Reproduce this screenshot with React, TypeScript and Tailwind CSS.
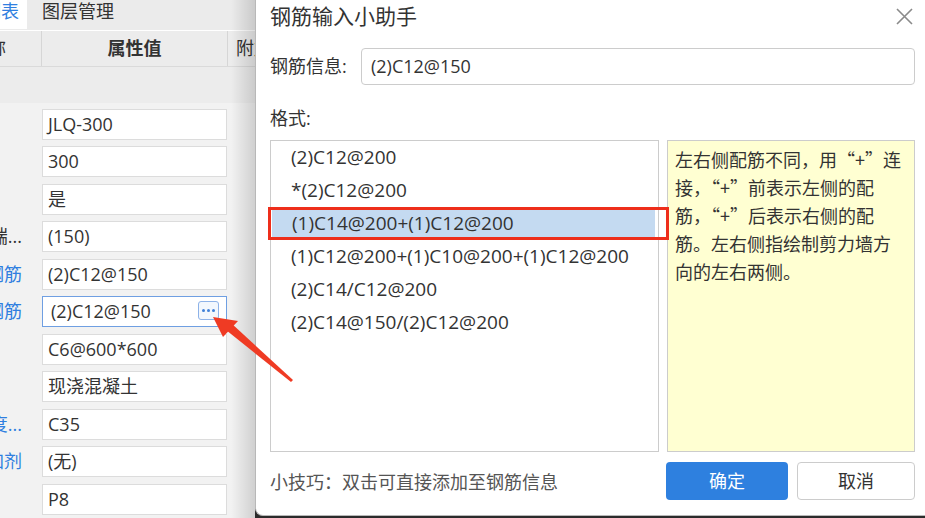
import React from "react";

const rows = [
  { label: "", value: "JLQ-300" },
  { label: "", value: "300" },
  { label: "", value: "是" },
  { label: "是否墙端...", value: "(150)", dark: true },
  { label: "水平分布钢筋", value: "(2)C12@150" },
  { label: "垂直分布钢筋", value: "(2)C12@150", active: true },
  { label: "", value: "C6@600*600" },
  { label: "", value: "现浇混凝土" },
  { label: "混凝土强度...", value: "C35" },
  { label: "混凝土外加剂", value: "(无)" },
  { label: "", value: "P8" },
];

const formats = [
  "(2)C12@200",
  "*(2)C12@200",
  "(1)C14@200+(1)C12@200",
  "(1)C12@200+(1)C10@200+(1)C12@200",
  "(2)C14/C12@200",
  "(2)C14@150/(2)C12@200",
];

const font = { fontFamily: '"Open Sans", "Noto Sans CJK SC", sans-serif' };
const cjk = { fontFamily: '"Noto Sans CJK SC", sans-serif' };

function PropertyPanel() {
  return (
    <div className="relative w-[255px] h-full bg-[#f2f2f2] flex flex-col shrink-0 overflow-hidden text-[18px] text-[#333]">
      {/* tabs */}
      <div className="h-[31px] bg-[#ebebeb] flex border-b border-white">
        <div className="w-[27px] shrink-0 h-[29px] bg-white overflow-hidden flex justify-end pr-[8px]">
          <span className="whitespace-nowrap text-[#2f7fe0] leading-[22px]">属性列表</span>
        </div>
        <div className="ml-[15px] leading-[22px] whitespace-nowrap">图层管理</div>
      </div>
      {/* header */}
      <div className="h-[36px] flex bg-[#ececec] border-b border-[#dadada]">
        <div className="w-[42px] shrink-0 border-r border-[#d6d6d6] overflow-hidden flex justify-end items-center pr-[35px]">
          <span className="whitespace-nowrap">属性名称</span>
        </div>
        <div className="w-[186px] shrink-0 border-r border-[#d6d6d6] flex items-center justify-center font-bold">
          属性值
        </div>
        <div className="flex-1 min-w-0 overflow-hidden pl-[8px] flex items-center whitespace-nowrap">附加</div>
      </div>
      {/* group row */}
      <div className="h-[36px] bg-[#ececec]" />
      <div className="pt-[3px] flex flex-col">
        {rows.map((r, i) => (
          <div key={i} className="h-[37.5px] flex items-center">
            <div className="w-[42px] shrink-0 overflow-hidden flex justify-end pr-[20px]">
              <span className={`whitespace-nowrap ${r.dark ? "text-[#333]" : "text-[#2f7fe0]"}`}>{r.label}</span>
            </div>
            <div
              className={`relative shrink-0 w-[185px] h-[31px] bg-white flex items-center pl-[5px] whitespace-nowrap ${
                r.active ? "border border-[#6f9fe2] pl-[8px]" : "border border-[#dcdcdc]"
              }`}
            >
              {r.value}
              {r.active && (
                <div className="absolute right-[7px] top-[4px] w-[21px] h-[19px] rounded-[3px] border border-[#8db2e8] bg-[#f2f7fd] flex items-center justify-center gap-[2px]">
                  <span className="w-[3px] h-[3px] rounded-full bg-[#3f80d8]" />
                  <span className="w-[3px] h-[3px] rounded-full bg-[#3f80d8]" />
                  <span className="w-[3px] h-[3px] rounded-full bg-[#3f80d8]" />
                </div>
              )}
            </div>
          </div>
        ))}
      </div>
      {/* dialog shadow */}
      <div className="absolute right-0 top-0 h-full w-[24px] bg-gradient-to-r from-transparent to-[rgba(0,0,0,0.14)]" />
    </div>
  );
}

function RebarDialog() {
  return (
    <div className="flex-1 h-[516px] bg-white rounded-bl-[8px] border-l border-b border-[#b8b8b8] pl-[14px] pr-[10px] flex flex-col text-[18px] text-[#333]">
      <div className="h-[32px] flex items-center justify-between">
        <span className="text-[21px] text-[#333] whitespace-nowrap" style={cjk}>钢筋输入小助手</span>
        <svg width="17" height="17" viewBox="0 0 17 17" className="mr-[2px]">
          <path d="M1 1L16 16M16 1L1 16" stroke="#8a8a8a" strokeWidth="1.6" fill="none" />
        </svg>
      </div>
      <div className="mt-[16px] h-[37px] flex items-center">
        <span className="w-[91px] whitespace-nowrap">钢筋信息:</span>
        <div className="flex-1 h-full border border-[#cccccc] rounded-[4px] flex items-center pl-[9px]">
          (2)C12@150
        </div>
      </div>
      <div className="mt-[22px] leading-[22px]">格式:</div>
      <div className="relative mt-[11px] h-[312px] flex gap-[8px]">
        <div className="w-[389px] border border-[#cccccc] flex flex-col text-[19px]">
          {formats.map((f, i) => (
            <div
              key={f}
              className={`h-[33px] flex items-center pl-[20px] whitespace-nowrap ${
                i === 2 ? "bg-[#c4daf1] ml-[1px] mr-[3px] pl-[19px]" : ""
              }`}
            >
              {f}
            </div>
          ))}
        </div>
        <div className="flex-1 bg-[#ffffd2] border border-[#cccccc] pl-[7px] pt-[4px] leading-[28px] whitespace-nowrap" style={cjk}>
          左右侧配筋不同，用“+”连
          <br />
          接，“+”前表示左侧的配
          <br />
          筋，“+”后表示右侧的配
          <br />
          筋。左右侧指绘制剪力墙方
          <br />
          向的左右两侧。
        </div>
        {/* highlight annotation */}
        <div className="absolute left-[-2px] top-[67px] w-[401px] h-[33px] border-[3px] border-[#ee2e1b]" />
      </div>
      <div className="mt-[10px] h-[38px] flex items-center">
        <span className="flex-1 text-[#555] whitespace-nowrap" style={cjk}>小技巧：双击可直接添加至钢筋信息</span>
        <button className="w-[122px] h-[38px] rounded-[4px] bg-[#2e80df] text-white">确定</button>
        <button className="ml-[9px] w-[118px] h-[38px] rounded-[4px] border border-[#cccccc] bg-white text-[#333]">取消</button>
      </div>
    </div>
  );
}

export default function App() {
  return (
    <div className="relative w-[925px] h-[518px] overflow-hidden flex bg-[#2b2b2b]" style={font} lang="zh-CN">
      <PropertyPanel />
      <RebarDialog />
      <svg className="absolute left-0 top-0 pointer-events-none" width="925" height="518">
        <polygon points="293,380 291,382 226,330 231,323" fill="#ef3b24" />
        <polygon points="213,317 238,321 223,337" fill="#ef3b24" />
      </svg>
    </div>
  );
}
